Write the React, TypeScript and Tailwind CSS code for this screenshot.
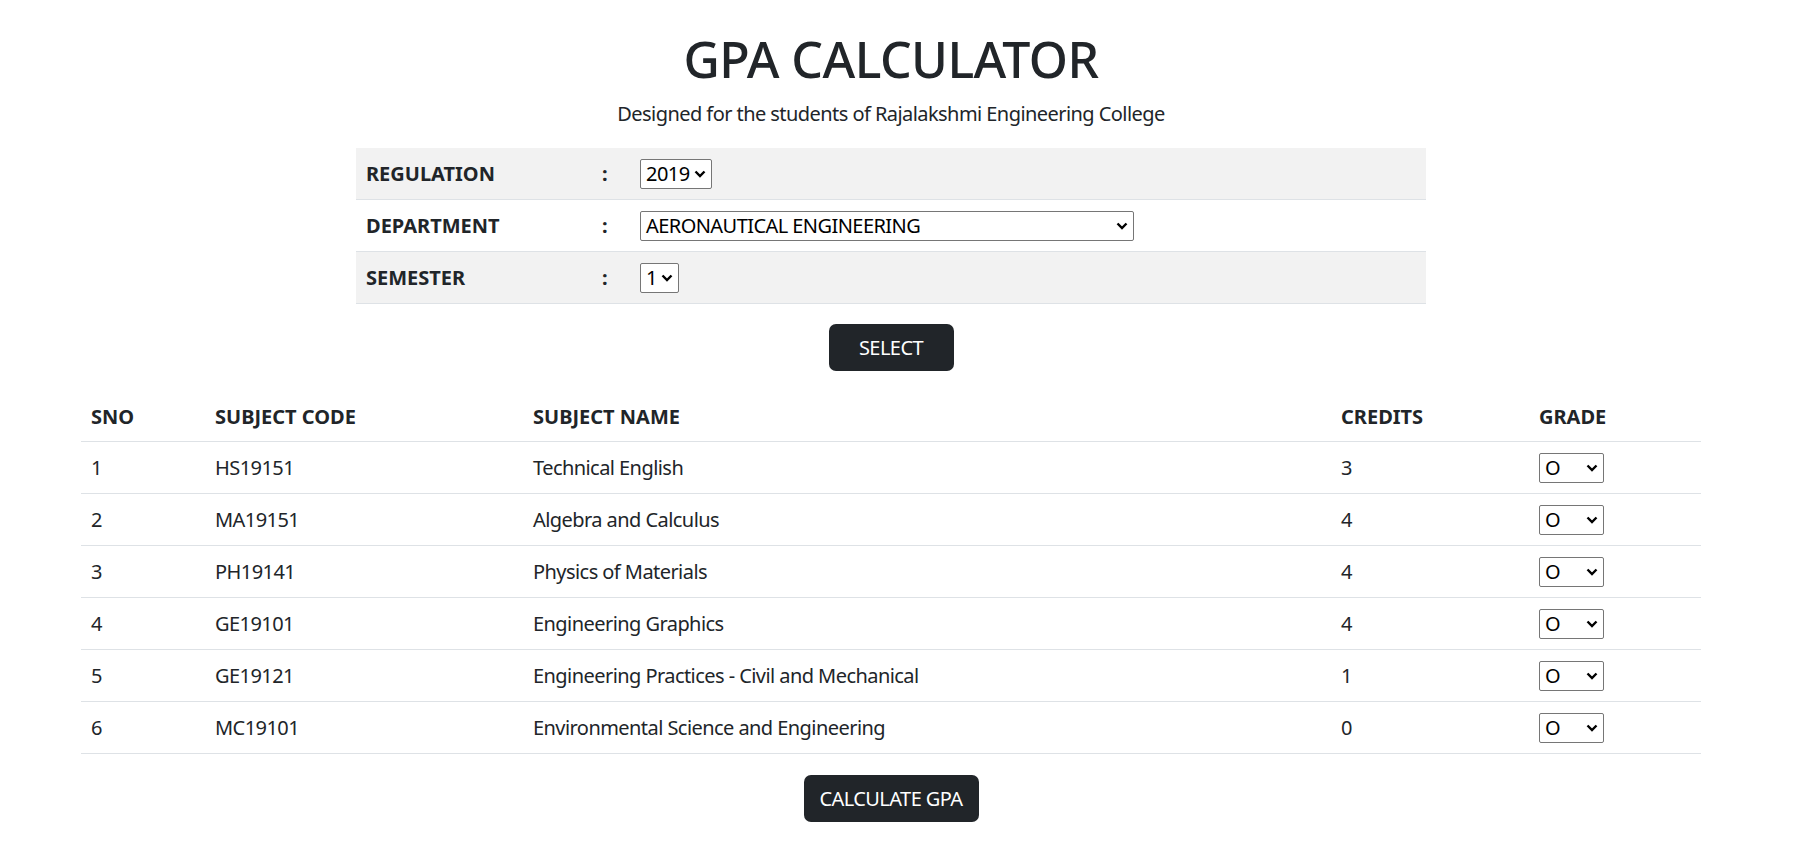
import React from "react";

const subjects = [
  { sno: 1, code: "HS19151", name: "Technical English", credits: 3 },
  { sno: 2, code: "MA19151", name: "Algebra and Calculus", credits: 4 },
  { sno: 3, code: "PH19141", name: "Physics of Materials", credits: 4 },
  { sno: 4, code: "GE19101", name: "Engineering Graphics", credits: 4 },
  { sno: 5, code: "GE19121", name: "Engineering Practices - Civil and Mechanical", credits: 1 },
  { sno: 6, code: "MC19101", name: "Environmental Science and Engineering", credits: 0 },
];

const Chevron = () => (
  <svg width="12" height="8" viewBox="0 0 12 8" className="shrink-0">
    <polyline points="1.5,1.5 6,6 10.5,1.5" fill="none" stroke="#000" strokeWidth="2.4" />
  </svg>
);

// looks like a native select box
const FakeSelect = ({ value, className }: { value: string; className: string }) => (
  <div
    className={`flex items-center justify-between h-[30px] border border-[#767676] rounded-[2px] bg-white pl-[5px] pr-[5px] text-[20px] leading-none text-black tracking-[-0.028em] ${className}`}
  >
    <span>{value}</span>
    <Chevron />
  </div>
);

const App = () => {
  return (
    <div
      className="w-[1782px] flex flex-col items-center bg-white text-[#212529] text-[20px] leading-[30px]"
      style={{ fontFamily: '"Noto Sans", "Open Sans", sans-serif' }}
    >
      <h1 className="mt-[29px] text-[50px] leading-[60px] font-medium tracking-[-0.011em]">GPA CALCULATOR</h1>
      <p className="mt-[10px] tracking-[-0.028em]">Designed for the students of Rajalakshmi Engineering College</p>

      {/* Regulation / department / semester */}
      <div className="mt-[19px] w-[1070px] flex flex-col">
        <div className="flex items-center h-[52px] bg-[#f2f2f2] border-b border-[#dee2e6]">
          <div className="w-[236px] pl-[10px] font-bold">REGULATION</div>
          <div className="w-[48px] pl-[10px] font-bold">:</div>
          <FakeSelect value="2019" className="w-[72px]" />
        </div>
        <div className="flex items-center h-[52px] border-b border-[#dee2e6]">
          <div className="w-[236px] pl-[10px] font-bold">DEPARTMENT</div>
          <div className="w-[48px] pl-[10px] font-bold">:</div>
          <FakeSelect value="AERONAUTICAL ENGINEERING" className="w-[494px]" />
        </div>
        <div className="flex items-center h-[52px] bg-[#f2f2f2] border-b border-[#dee2e6]">
          <div className="w-[236px] pl-[10px] font-bold">SEMESTER</div>
          <div className="w-[48px] pl-[10px] font-bold">:</div>
          <FakeSelect value="1" className="w-[39px]" />
        </div>
      </div>

      <button className="mt-[20px] w-[125px] h-[47px] rounded-[7px] bg-[#212529] text-white tracking-[-0.028em]">
        SELECT
      </button>

      {/* Subjects */}
      <div className="mt-[19px] w-[1620px] flex flex-col">
        <div className="flex items-center h-[52px] pt-[3px] border-b border-[#dee2e6] font-bold">
          <div className="w-[124px] pl-[10px]">SNO</div>
          <div className="w-[318px] pl-[10px]">SUBJECT CODE</div>
          <div className="w-[808px] pl-[10px]">SUBJECT NAME</div>
          <div className="w-[198px] pl-[10px]">CREDITS</div>
          <div className="w-[172px] pl-[10px]">GRADE</div>
        </div>
        {subjects.map((s) => (
          <div key={s.sno} className="flex items-center h-[52px] border-b border-[#dee2e6] tracking-[-0.028em]">
            <div className="w-[124px] pl-[10px]">{s.sno}</div>
            <div className="w-[318px] pl-[10px]">{s.code}</div>
            <div className="w-[808px] pl-[10px]">{s.name}</div>
            <div className="w-[198px] pl-[10px]">{s.credits}</div>
            <div className="w-[172px] pl-[10px]">
              <FakeSelect value="O" className="w-[65px]" />
            </div>
          </div>
        ))}
      </div>

      <button className="mt-[21px] mb-[20px] w-[175px] h-[47px] rounded-[7px] bg-[#212529] text-white tracking-[-0.028em]">
        CALCULATE GPA
      </button>
    </div>
  );
};

export default App;
